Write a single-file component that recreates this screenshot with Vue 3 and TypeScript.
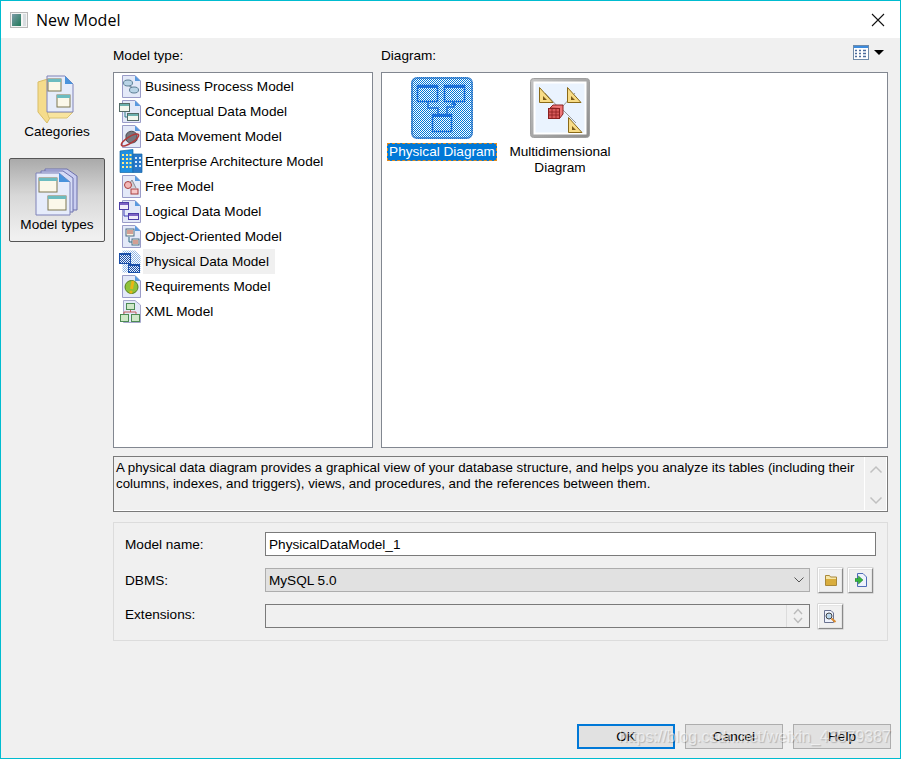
<script setup lang="ts">
import { ref } from 'vue'

const modelTypes = [
  { icon: 'bpm', label: 'Business Process Model' },
  { icon: 'cdm', label: 'Conceptual Data Model' },
  { icon: 'dmm', label: 'Data Movement Model' },
  { icon: 'eam', label: 'Enterprise Architecture Model' },
  { icon: 'free', label: 'Free Model' },
  { icon: 'ldm', label: 'Logical Data Model' },
  { icon: 'oom', label: 'Object-Oriented Model' },
  { icon: 'pdm', label: 'Physical Data Model' },
  { icon: 'req', label: 'Requirements Model' },
  { icon: 'xml', label: 'XML Model' },
]

const selected = ref('pdm')
const modelName = ref('PhysicalDataModel_1')
</script>

<template>
  <div class="dialog">
    <header class="titlebar">
      <svg class="app-icon" width="18" height="16" viewBox="0 0 18 16">
        <defs>
          <linearGradient id="app-fill" x1="0" y1="0" x2="1" y2="1">
            <stop offset="0" stop-color="#7c9ca8" />
            <stop offset="1" stop-color="#1f7a58" />
          </linearGradient>
        </defs>
        <rect x="0.5" y="0.5" width="17" height="15" fill="#f4f4f4" stroke="#b8b8b8" />
        <rect x="2" y="2" width="9" height="12" fill="url(#app-fill)" />
        <rect x="13" y="2" width="3" height="12" fill="#d8dde0" />
      </svg>
      <span class="title">New Model</span>
      <svg class="close" width="14" height="14" viewBox="0 0 14 14">
        <path d="M1 1 13 13M13 1 1 13" stroke="#111" stroke-width="1.1" fill="none" />
      </svg>
    </header>

    <div class="content">
      <aside class="sidebar">
        <div class="side-item">
          <svg width="40" height="50" viewBox="0 0 40 50">
            <path d="M1 8 14 4V42L10 49 1 38Z" fill="#f5dc8c" stroke="#d9bd67" />
            <path d="M10 38H36L30 44H12Z" fill="#f8e49e" stroke="#dcc473" />
            <path d="M10 2H28L36 10V38H10Z" fill="#e6ecfa" stroke="#7f82b8" />
            <path d="M28 2V10H36Z" fill="#4a93dc" />
            <rect x="11" y="5" width="13" height="12" fill="#fbf8ea" stroke="#7d7650" />
            <rect x="11" y="5" width="13" height="3" fill="#6cbcc0" />
            <rect x="20" y="21" width="13" height="12" fill="#fbf8ea" stroke="#7d7650" />
            <rect x="20" y="21" width="13" height="3" fill="#6cbcc0" />
          </svg>
          <span>Categories</span>
        </div>
        <div class="side-item active">
          <svg width="44" height="48" viewBox="0 0 44 48">
            <path d="M10 1H32L42 8V42H10Z" fill="#c9cdf0" stroke="#6d70ad" />
            <path d="M6 3H28L38 10V44H6Z" fill="#d6dcf6" stroke="#6d70ad" />
            <path d="M1 5H24L35 14V47H1Z" fill="#e6ecfb" stroke="#7f82b8" />
            <path d="M24 5V14H35Z" fill="#4a93dc" />
            <rect x="4" y="10" width="18" height="14" fill="#fbf8ea" stroke="#7d7650" />
            <rect x="4" y="10" width="18" height="3" fill="#6cbcc0" />
            <rect x="13" y="28" width="18" height="14" fill="#fbf8ea" stroke="#7d7650" />
            <rect x="13" y="28" width="18" height="3" fill="#6cbcc0" />
          </svg>
          <span>Model types</span>
        </div>
      </aside>

      <main class="main">
        <div class="panes">
          <section class="pane types">
            <div class="pane-label">Model type:</div>
            <ul class="type-list">
              <li
                v-for="item in modelTypes"
                :key="item.icon"
                class="type-row"
                :class="{ selected: selected === item.icon }"
              >
                <svg class="type-icon" width="24" height="25" viewBox="0 0 24 25">
                  <template v-if="item.icon !== 'eam' && item.icon !== 'xml' && item.icon !== 'pdm'">
                    <path d="M3.5 1.5H16L21.5 7V23.5H3.5Z" fill="#e3e9f8" stroke="#9a9cc8" />
                    <path d="M16 1.5V7H21.5Z" fill="#5a9ade" />
                  </template>
                  <template v-if="item.icon === 'bpm'">
                    <path d="M9 9 14 16" stroke="#8a98a8" stroke-width="2" />
                    <ellipse cx="9" cy="9" rx="4.5" ry="3" fill="#b9d4e6" stroke="#5d7f95" />
                    <ellipse cx="15" cy="16" rx="4.5" ry="3" fill="#b9d4e6" stroke="#5d7f95" />
                  </template>
                  <template v-else-if="item.icon === 'cdm'">
                    <rect x="0.5" y="4.5" width="10" height="8" fill="#f3f7ee" stroke="#546b66" />
                    <rect x="1" y="5" width="9" height="2" fill="#6bb0ad" />
                    <path d="M6 13V18H10" stroke="#2d7d8a" fill="none" />
                    <rect x="8.5" y="14.5" width="11" height="7" fill="#f3f7ee" stroke="#546b66" />
                    <rect x="9" y="15" width="10" height="2" fill="#6bb0ad" />
                  </template>
                  <template v-else-if="item.icon === 'dmm'">
                    <path d="M7 11C9 6 16 6 18 11V16C16 20 9 20 7 16Z" fill="#77777f" stroke="#4c4c52" />
                    <ellipse cx="11" cy="16" rx="10" ry="3.2" transform="rotate(-32 11 16)" fill="none" stroke="#b23a3a" stroke-width="1.5" />
                  </template>
                  <template v-else-if="item.icon === 'eam'">
                    <path d="M1 2 14 0.5V23.5H1Z" fill="#1f8fe0" stroke="#1467a8" stroke-width="0.7" />
                    <path d="M14 5H23V23.5H14Z" fill="#2a78c8" stroke="#1467a8" stroke-width="0.7" />
                    <path d="M3 6H5M7 6H9M10.5 6H12.5M3 10H5M7 10H9M10.5 10H12.5M3 14H5M7 14H9M10.5 14H12.5M3 18H5M7 18H9M10.5 18H12.5" stroke="#ffe98a" stroke-width="2" />
                    <path d="M16 9H18M20 9H22M16 13H18M20 13H22M16 17H18M20 17H22" stroke="#cfe8ff" stroke-width="2" />
                  </template>
                  <template v-else-if="item.icon === 'free'">
                    <path d="M8 13 13 6 17 14" fill="#cfcfd6" stroke="#8d8d96" />
                    <circle cx="9" cy="11" r="3.5" fill="#f2b8b8" stroke="#a83f3f" />
                    <rect x="12" y="15" width="7" height="5" fill="#f7c9c9" stroke="#a83f3f" />
                  </template>
                  <template v-else-if="item.icon === 'ldm'">
                    <rect x="0.5" y="3.5" width="9" height="7" fill="#f0ecfa" stroke="#4d3fa8" />
                    <rect x="1" y="4" width="8" height="2" fill="#7d63c4" />
                    <path d="M5 11V17H10" stroke="#3f3fb8" fill="none" />
                    <rect x="9.5" y="14.5" width="10" height="6" fill="#f0ecfa" stroke="#4d3fa8" />
                    <rect x="10" y="15" width="9" height="2" fill="#7d63c4" />
                  </template>
                  <template v-else-if="item.icon === 'oom'">
                    <rect x="7" y="5" width="8" height="7" fill="#f6f2dc" stroke="#4c6d88" />
                    <path d="M8 7H14M8 9H14" stroke="#b04a4a" />
                    <path d="M10 13V18H13" stroke="#2c6a82" fill="none" />
                    <rect x="13" y="15" width="7" height="6" fill="#f6f2dc" stroke="#4c6d88" />
                    <path d="M14 17H19M14 19H19" stroke="#b04a4a" />
                  </template>
                  <template v-else-if="item.icon === 'pdm'">
                    <path d="M3.5 1.5H16L21.5 7V23.5H3.5Z" fill="url(#list-dither)" />
                    <rect x="0.5" y="4.5" width="11" height="10" fill="url(#dark-dither)" stroke="#1a4fa8" />
                    <rect x="0" y="4" width="12" height="2" fill="#1a4fa8" />
                    <rect x="9.5" y="15.5" width="11" height="8" fill="url(#dark-dither)" stroke="#1a4fa8" />
                    <rect x="9" y="15" width="12" height="2" fill="#1a4fa8" />
                  </template>
                  <template v-else-if="item.icon === 'req'">
                    <circle cx="12.5" cy="13" r="6.5" fill="#8fc23a" stroke="#55801c" />
                    <path d="M14 7 12.5 15" stroke="#e9b516" stroke-width="3" />
                    <circle cx="12" cy="18" r="1.6" fill="#e9b516" />
                  </template>
                  <template v-else-if="item.icon === 'xml'">
                    <path d="M4.5 1.5H16L21.5 6V23.5H4.5Z" fill="#e3e9f8" stroke="#a6a8cc" />
                    <rect x="7.5" y="4.5" width="8" height="6" fill="#cfe8c8" stroke="#4c8a54" />
                    <path d="M11.5 11V13M5 15V13H17V15" stroke="#c05a5a" fill="none" />
                    <rect x="1.5" y="15.5" width="8" height="7" fill="#cfe8c8" stroke="#4c8a54" />
                    <rect x="12.5" y="15.5" width="8" height="7" fill="#cfe8c8" stroke="#4c8a54" />
                  </template>
                </svg>
                <span class="type-label">{{ item.label }}</span>
              </li>
            </ul>
          </section>

          <section class="pane diagrams">
            <div class="pane-label diagram-head">
              <span>Diagram:</span>
              <span class="view-switch">
                <svg width="16" height="15" viewBox="0 0 16 15">
                  <rect x="0.5" y="0.5" width="15" height="14" fill="#fff" stroke="#6f8aa8" />
                  <rect x="1" y="1" width="14" height="2" fill="#3d8bdc" />
                  <path d="M2 5.5H4M6 5.5H8M10 5.5H13M2 8.5H4M6 8.5H8M10 8.5H13M2 11.5H4M6 11.5H8M10 11.5H13" stroke="#4c6c9c" stroke-width="1.4" />
                </svg>
                <i class="caret"></i>
              </span>
            </div>
            <div class="diagram-list">
              <div class="diagram-item first">
                <svg width="62" height="62" viewBox="0 0 62 62">
                  <defs>
                    <pattern id="list-dither" width="2" height="2" patternUnits="userSpaceOnUse">
                      <rect width="2" height="2" fill="#fff" />
                      <rect width="1" height="1" fill="#8cb4e4" />
                      <rect x="1" y="1" width="1" height="1" fill="#8cb4e4" />
                    </pattern>
                    <pattern id="dark-dither" width="2" height="2" patternUnits="userSpaceOnUse">
                      <rect width="2" height="2" fill="#e8f0fa" />
                      <rect width="1" height="1" fill="#1a4fa8" />
                      <rect x="1" y="1" width="1" height="1" fill="#1a4fa8" />
                    </pattern>
                    <pattern id="dither" width="2" height="2" patternUnits="userSpaceOnUse">
                      <rect width="2" height="2" fill="#fff" />
                      <rect width="1" height="1" fill="#0078d7" />
                      <rect x="1" y="1" width="1" height="1" fill="#0078d7" />
                    </pattern>
                    <pattern id="edge-dither" width="2" height="2" patternUnits="userSpaceOnUse">
                      <rect width="2" height="2" fill="#6aa6e2" />
                      <rect width="1" height="1" fill="#1f6fc4" />
                      <rect x="1" y="1" width="1" height="1" fill="#1f6fc4" />
                    </pattern>
                  </defs>
                  <rect x="1" y="1" width="60" height="60" rx="5" fill="url(#dither)" stroke="url(#edge-dither)" stroke-width="2" />
                  <g fill="none" stroke="#1a6fd8" stroke-width="1.5">
                    <rect x="6.5" y="8.5" width="20" height="16" />
                    <rect x="33.5" y="8.5" width="20" height="16" />
                    <rect x="21.5" y="37.5" width="19" height="17" />
                    <path d="M17 25V31H27V37M36 37V30H43V26" />
                  </g>
                  <path d="M6 8H27V11H6ZM33 8H54V11H33ZM21 37H41V40H21Z" fill="#1a6fd8" />
                  <path d="M43 24 40 28H46Z" fill="#1a6fd8" />
                </svg>
                <span class="caption selected-caption">Physical Diagram</span>
              </div>
              <div class="diagram-item">
                <svg width="60" height="60" viewBox="0 0 60 60">
                  <defs>
                    <linearGradient id="frame-fill" x1="0" y1="0" x2="1" y2="1">
                      <stop offset="0" stop-color="#c4c4c4" />
                      <stop offset="1" stop-color="#8c8c8c" />
                    </linearGradient>
                  </defs>
                  <rect x="0.5" y="0.5" width="59" height="59" rx="3" fill="url(#frame-fill)" stroke="#a0a0a0" />
                  <rect x="4.5" y="4.5" width="51" height="51" fill="#eaf3fe" stroke="#fff" stroke-width="2" />
                  <path d="M15 15 29 30M45 15 31 30M46 45 31 30" stroke="#9a9a9a" />
                  <g fill="#f8dc86" stroke="#8a6a18">
                    <path d="M9.5 9.5V24.5H23Z" />
                    <path d="M37.5 9.5V24.5H51Z" />
                    <path d="M38.5 39.5V54.5H52Z" />
                  </g>
                  <path d="M13 18V22H17ZM41 18V22H45ZM42 48V52H46Z" fill="#7a5a18" />
                  <path d="M20 30 23 27H33V36L29.5 40.5V30.5Z" fill="#e77" stroke="#8a2020" />
                  <rect x="18.5" y="30.5" width="11" height="10" fill="#d85a5a" stroke="#8a2020" />
                  <path d="M18.5 34H29.5M18.5 37H29.5M22 30.5V40.5M26 30.5V40.5" stroke="#8a2020" stroke-width="0.8" />
                </svg>
                <span class="caption">Multidimensional<br />Diagram</span>
              </div>
            </div>
          </section>
        </div>

        <div class="description">
          <p>A physical data diagram provides a graphical view of your database structure, and helps you analyze its tables (including their columns, indexes, and triggers), views, and procedures, and the references between them.</p>
          <div class="scrollbar">
            <svg width="14" height="9" viewBox="0 0 14 9"><path d="M1.5 7.5 7 2l5.5 5.5" fill="none" stroke="#c0c0c0" stroke-width="1.5" /></svg>
            <svg width="14" height="9" viewBox="0 0 14 9"><path d="M1.5 1.5 7 7l5.5-5.5" fill="none" stroke="#c0c0c0" stroke-width="1.5" /></svg>
          </div>
        </div>

        <div class="form-panel">
          <div class="form-row">
            <label>Model name:</label>
            <input v-model="modelName" class="text-input" type="text" />
          </div>
          <div class="form-row">
            <label>DBMS:</label>
            <div class="select">
              <span>MySQL 5.0</span>
              <svg width="10" height="6" viewBox="0 0 10 6"><path d="M.5 .5 5 5 9.5 .5" fill="none" stroke="#555" /></svg>
            </div>
            <button class="icon-btn" type="button">
              <svg width="12" height="11" viewBox="0 0 12 11">
                <path d="M.5 .5H4.5L5.5 2H11.5V10.5H.5Z" fill="#f6e6a8" stroke="#a9883a" />
                <rect x="1" y="4" width="10" height="6" fill="#d9ad3d" />
              </svg>
            </button>
            <button class="icon-btn second" type="button">
              <svg width="12" height="14" viewBox="0 0 12 14">
                <path d="M2.5 .5H8L11.5 4V13.5H2.5Z" fill="#eef2fc" stroke="#4f6cb8" />
                <path d="M0 5.500H3.500V3L8 7 3.500 11V8.500H0Z" fill="#35b53f" stroke="#1c7a28" stroke-width=".5" />
              </svg>
            </button>
          </div>
          <div class="form-row">
            <label class="raised">Extensions:</label>
            <div class="spin-input">
              <div class="spin">
                <svg width="10" height="7" viewBox="0 0 10 7"><path d="M1 6 5 1.500 9 6" fill="none" stroke="#bbb" stroke-width="1.4" /></svg>
                <svg width="10" height="7" viewBox="0 0 10 7"><path d="M1 1 5 5.500 9 1" fill="none" stroke="#bbb" stroke-width="1.4" /></svg>
              </div>
            </div>
            <button class="icon-btn" type="button">
              <svg width="13" height="13" viewBox="0 0 13 13">
                <path d="M.5 .5H7L9.500 3V12.500H.5Z" fill="#eef2fc" stroke="#6a7290" />
                <circle cx="5" cy="6" r="3" fill="#bcd8ee" stroke="#444" />
                <path d="M7.500 8.500 11.500 12" stroke="#d98a30" stroke-width="2" />
              </svg>
            </button>
          </div>
        </div>
      </main>
    </div>

    <footer class="footer">
      <button class="btn primary" type="button">OK</button>
      <button class="btn" type="button">Cancel</button>
      <button class="btn" type="button">Help</button>
      <span class="watermark">https://blog.csdn.net/weixin_43579387</span>
    </footer>
  </div>
</template>

<style>
html,
body {
  margin: 0;
  background: #f0f0f0;
}
</style>

<style scoped>
.dialog {
  position: relative;
  box-sizing: border-box;
  width: 901px;
  height: 759px;
  display: flex;
  flex-direction: column;
  border: 1px solid #00bcd0;
  background: #f0f0f0;
  color: #000;
  font-family: "Liberation Sans", Arial, sans-serif;
  font-size: 13.6px;
  overflow: hidden;
}
.titlebar {
  height: 37px;
  flex: none;
  display: flex;
  align-items: center;
  padding: 0 15px 0 9px;
  background: #fff;
}
.app-icon {
  margin-right: 8px;
}
.title {
  flex: 1;
  font-family: "Open Sans", sans-serif;
  font-size: 16px;
}
.content {
  flex: 1;
  display: flex;
  gap: 8px;
  padding: 0 12px 0 8px;
  min-height: 0;
}
.sidebar {
  width: 96px;
  flex: none;
  padding-top: 36px;
  display: flex;
  flex-direction: column;
}
.side-item {
  display: flex;
  flex-direction: column;
  align-items: center;
  height: 84px;
  box-sizing: border-box;
}
.side-item span {
  line-height: 16px;
}
.side-item.active {
  border: 1px solid #555;
  border-radius: 2px;
  background: linear-gradient(#aaa, #d8d8d8 45%, #f0f0f0 95%);
  padding-top: 9px;
}
.side-item.active span {
  margin-top: 1px;
}
.main {
  flex: 1;
  min-width: 0;
}
.panes {
  display: flex;
  gap: 8px;
}
.pane-label {
  height: 34px;
  line-height: 36px;
}
.types {
  width: 260px;
  flex: none;
}
.diagrams {
  flex: 1;
  min-width: 0;
}
.type-list {
  box-sizing: border-box;
  height: 376px;
  margin: 0;
  padding: 1px 0 0 5px;
  list-style: none;
  background: #fff;
  border: 1px solid #828790;
}
.type-row {
  display: flex;
  align-items: center;
  height: 25px;
}
.type-icon {
  flex: none;
}
.type-label {
  padding: 0 6px 0 2px;
  line-height: 25px;
  white-space: nowrap;
}
.type-row.selected .type-label {
  background: #f0f0f0;
}
.diagram-head {
  display: flex;
  justify-content: space-between;
}
.view-switch {
  display: flex;
  align-items: center;
  gap: 5px;
  margin-right: 4px;
  margin-top: -5px;
}
.caret {
  width: 0;
  height: 0;
  border-left: 5px solid transparent;
  border-right: 5px solid transparent;
  border-top: 5px solid #000;
}
.diagram-list {
  box-sizing: border-box;
  height: 376px;
  padding: 4px 0 0 5px;
  display: flex;
  align-items: flex-start;
  gap: 8px;
  background: #fff;
  border: 1px solid #828790;
}
.diagram-item {
  width: 110px;
  display: flex;
  flex-direction: column;
  align-items: center;
  text-align: center;
}
.diagram-item + .diagram-item {
  padding-top: 1px;
}
.caption {
  margin-top: 6px;
  line-height: 16px;
  white-space: nowrap;
}
.diagram-item.first .caption {
  margin-top: 4px;
}
.selected-caption {
  box-sizing: border-box;
  width: 110px;
  height: 18px;
  line-height: 18px;
  color: #fff;
  background: #0078d7;
  outline: 1px dashed #e08a1e;
  outline-offset: -1px;
}
.description {
  box-sizing: border-box;
  height: 56px;
  margin-top: 8px;
  display: flex;
  border: 1px solid #7a7a7a;
  box-shadow: inset -1px -1px 0 #fff;
}
.description p {
  flex: 1;
  margin: 0;
  padding: 3px 0 0 2px;
  font-size: 13.3px;
  line-height: 16px;
}
.scrollbar {
  width: 22px;
  flex: none;
  margin-right: 1px;
  padding: 8px 0 6px;
  box-sizing: border-box;
  border-left: 1px solid #fff;
  display: flex;
  flex-direction: column;
  justify-content: space-between;
  align-items: center;
}
.form-panel {
  box-sizing: border-box;
  height: 119px;
  margin-top: 10px;
  padding: 9px 11px 0;
  border: 1px solid #dcdcdc;
  display: flex;
  flex-direction: column;
  gap: 12px;
}
.form-row {
  display: flex;
  align-items: center;
  height: 24px;
}
.form-row label {
  width: 140px;
  flex: none;
}
.form-row label.raised {
  padding-bottom: 4px;
}
.text-input {
  box-sizing: border-box;
  width: 611px;
  height: 24px;
  padding: 0 3px;
  border: 1px solid #7a7a7a;
  font: inherit;
  color: #000;
  outline: none;
}
.select {
  box-sizing: border-box;
  width: 545px;
  height: 24px;
  display: flex;
  align-items: center;
  justify-content: space-between;
  padding: 0 5px 0 3px;
  background: #e1e1e1;
  border: 1px solid #adadad;
}
.spin-input {
  box-sizing: border-box;
  width: 545px;
  height: 24px;
  display: flex;
  justify-content: flex-end;
  border: 1px solid #7a7a7a;
}
.spin {
  width: 22px;
  padding-top: 3px;
  border-left: 1px solid #dcdcdc;
  display: flex;
  flex-direction: column;
  align-items: center;
  gap: 2px;
}
.icon-btn {
  box-sizing: border-box;
  width: 25px;
  height: 25px;
  margin-left: 8px;
  padding: 0;
  display: flex;
  align-items: center;
  justify-content: center;
  background: #f0f0f0;
  border: 1px solid;
  border-color: #fff #8a8a8a #8a8a8a #fff;
  box-shadow: inset 0 0 0 1px #e4e4e4, 0 0 0 0.5px #bdbdbd;
}
.icon-btn.second {
  margin-left: 5px;
}
.footer {
  position: relative;
  flex: none;
  height: 34px;
  display: flex;
  justify-content: flex-end;
  gap: 10px;
  padding-right: 9px;
}
.btn {
  box-sizing: border-box;
  width: 98px;
  height: 25px;
  padding: 0;
  background: #e1e1e1;
  border: 1px solid #adadad;
  font: inherit;
  color: #000;
}
.btn.primary {
  border: 2px solid #0078d7;
}
.watermark {
  position: absolute;
  right: 9px;
  top: 2px;
  font-size: 16px;
  line-height: 22px;
  color: rgba(255, 255, 255, 0.55);
  text-shadow: 1px 1px 1px rgba(0, 0, 0, 0.2);
  pointer-events: none;
}
</style>
